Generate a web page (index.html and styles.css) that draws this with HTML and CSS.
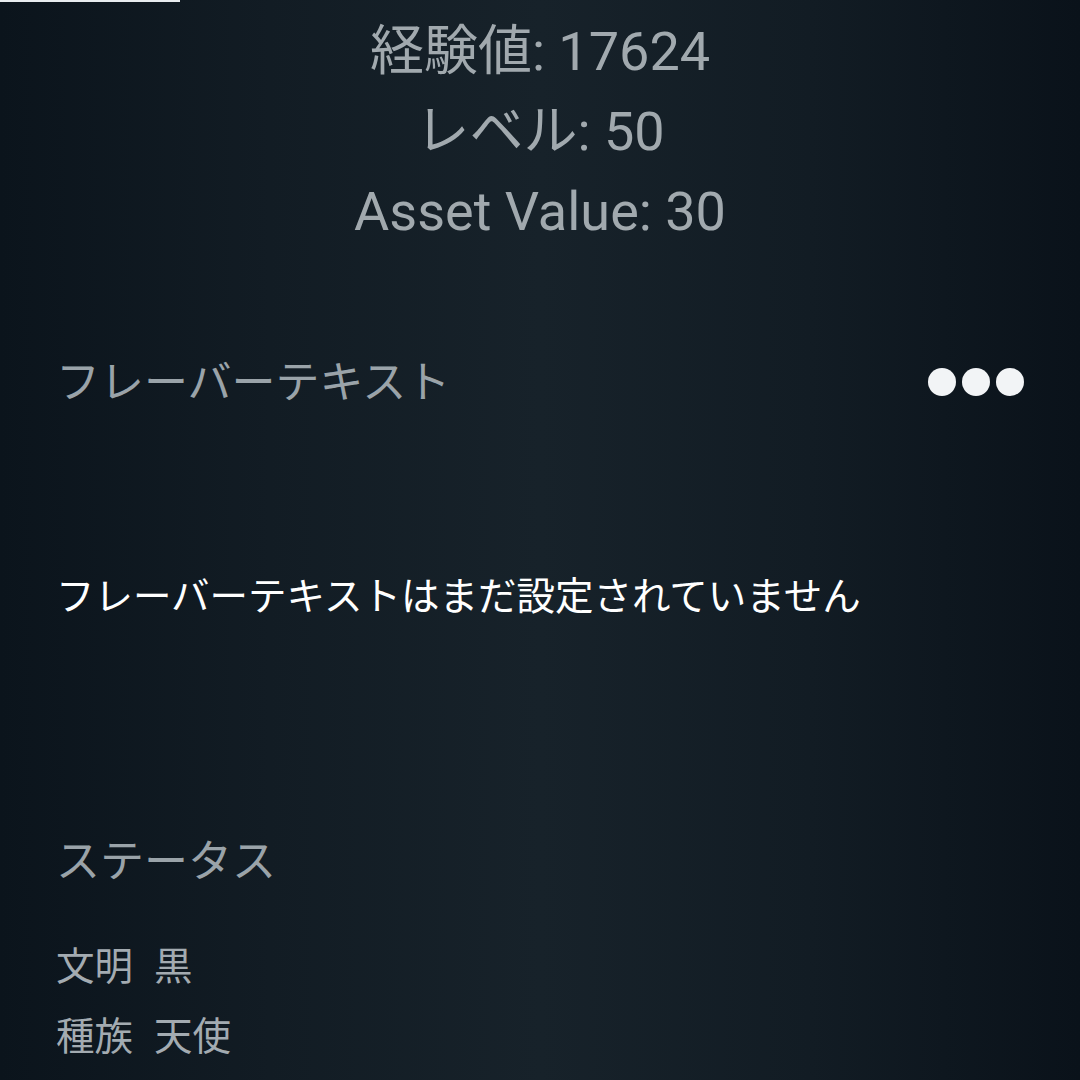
FILE: index.html
```html
<!DOCTYPE html>
<html lang="ja">
<head>
<meta charset="utf-8">
<link rel="stylesheet" href="styles.css">
</head>
<body>
<div class="topline"></div>
<main class="page">
  <section class="stats">
    <div class="stat">経験値: 17624</div>
    <div class="stat">レベル: 50</div>
    <div class="stat">Asset Value: 30</div>
  </section>
  <section class="flavor">
    <div class="section-head">
      <h2 class="section-title">フレーバーテキスト</h2>
      <div class="more" aria-label="more">
        <span class="dot"></span><span class="dot"></span><span class="dot"></span>
      </div>
    </div>
    <p class="flavor-text">フレーバーテキストはまだ設定されていません</p>
  </section>
  <section class="status">
    <h2 class="section-title">ステータス</h2>
    <div class="status-row"><span class="key">文明</span><span class="val">黒</span></div>
    <div class="status-row"><span class="key">種族</span><span class="val">天使</span></div>
  </section>
</main>
</body>
</html>
```
FILE: styles.css
```css
html, body {
  margin: 0;
  padding: 0;
}
body {
  width: 1080px;
  height: 1080px;
  overflow: hidden;
  background: linear-gradient(90deg, #0b141c 0%, #121c24 25%, #17222a 50%, #121c24 75%, #0a121a 100%);
  font-family: Roboto, "Noto Sans CJK JP", sans-serif;
  position: relative;
}
.topline {
  position: absolute;
  left: 0;
  top: 0;
  width: 180px;
  height: 2px;
  background: #e8ecef;
}
.page {
  padding: 12px 56px 0 56px;
}
.stats {
  text-align: center;
  color: #a1a9ae;
  font-size: 54px;
  line-height: 80px;
}
.section-head {
  display: flex;
  justify-content: space-between;
  align-items: center;
  margin-top: 100px;
}
.section-head .section-title {
  position: relative;
  top: 1px;
}
.section-title {
  margin: 0;
  font-weight: 400;
  font-size: 44px;
  line-height: 60px;
  color: #9aa3a9;
}
.more {
  display: flex;
  gap: 6px;
}
.dot {
  width: 28px;
  height: 28px;
  border-radius: 50%;
  background: #f2f4f6;
}
.flavor-text {
  margin: 158px 0 0 0;
  font-size: 38.5px;
  line-height: 54px;
  color: #ffffff;
}
.status {
  margin-top: 208px;
}
.status-row {
  display: flex;
  gap: 21px;
  font-size: 38.5px;
  line-height: 70px;
  color: #a3abb1;
}
.status .section-title {
  margin-bottom: 40px;
}
```
